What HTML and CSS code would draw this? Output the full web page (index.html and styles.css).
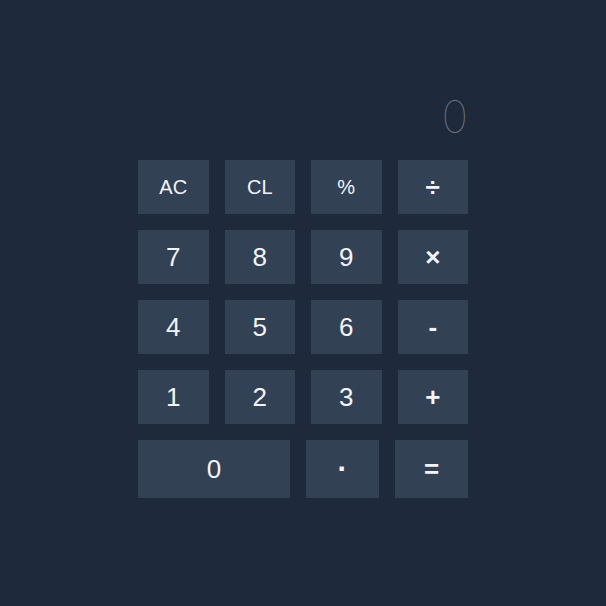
FILE: index.html
```html
<!DOCTYPE html>
<html>
<head>
<meta charset="utf-8">
<link rel="stylesheet" href="styles.css">
</head>
<body>
<div class="calc">
  <div class="display">0</div>
  <div class="keys">
    <div class="row">
      <button class="key small">AC</button>
      <button class="key small">CL</button>
      <button class="key small">%</button>
      <button class="key op">÷</button>
    </div>
    <div class="row">
      <button class="key">7</button>
      <button class="key">8</button>
      <button class="key">9</button>
      <button class="key op">×</button>
    </div>
    <div class="row">
      <button class="key">4</button>
      <button class="key">5</button>
      <button class="key">6</button>
      <button class="key op">-</button>
    </div>
    <div class="row">
      <button class="key">1</button>
      <button class="key">2</button>
      <button class="key">3</button>
      <button class="key op">+</button>
    </div>
    <div class="row last">
      <button class="key wide">0</button>
      <button class="key op dot">·</button>
      <button class="key op">=</button>
    </div>
  </div>
</div>
</body>
</html>
```
FILE: styles.css
```css
html, body {
  margin: 0;
  padding: 0;
  background: #1e293b;
  height: 100%;
}
.calc {
  width: 330px;
  margin: 0 auto;
  padding-top: 94px;
}
.display {
  text-align: right;
  font-family: Inter, sans-serif;
  font-weight: 100;
  font-size: 45px;
  line-height: 45px;
  height: 45px;
  color: #6b7280;
  margin-bottom: 21px;
}
.keys {
  display: flex;
  flex-direction: column;
  gap: 16px;
}
.row {
  display: flex;
  gap: 16px;
  height: 54px;
}
.row.last {
  height: 58px;
}
.key {
  flex: 1;
  border: 0;
  padding: 0;
  margin: 0;
  background: #334155;
  color: #f1f5f9;
  font-family: "Liberation Sans", Arial, sans-serif;
  font-size: 26px;
}
.key.small {
  font-size: 20px;
}
.key.op {
  font-weight: bold;
}
.key.dot {
  font-size: 30px;
}
.key.wide {
  flex: 0 0 152px;
}
```
